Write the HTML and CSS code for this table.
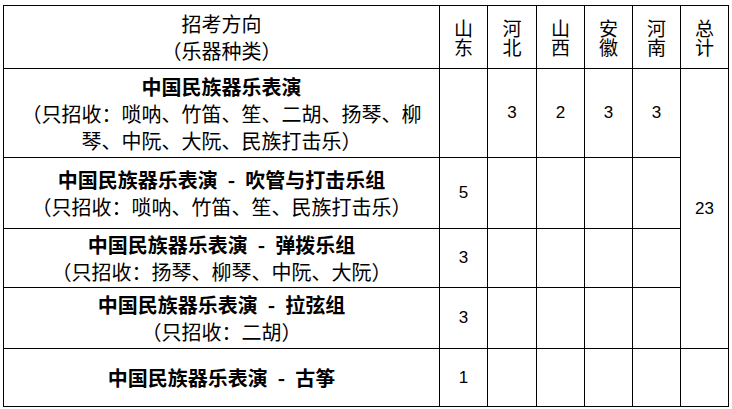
FILE: index.html
```html
<!DOCTYPE html>
<html lang="zh-CN">
<head>
<meta charset="utf-8">
<title>招考方向</title>
<link rel="stylesheet" href="styles.css">
</head>
<body>
<table class="grid">
  <colgroup>
    <col class="c-name">
    <col class="c-prov">
    <col class="c-prov c-wide">
    <col class="c-prov">
    <col class="c-prov">
    <col class="c-prov">
    <col class="c-prov">
  </colgroup>
  <tr class="r-head">
    <td class="name">招考方向<br>（乐器种类）</td>
    <td class="vert"><span class="ch">山</span><span class="ch">东</span></td>
    <td class="vert"><span class="ch">河</span><span class="ch">北</span></td>
    <td class="vert"><span class="ch">山</span><span class="ch">西</span></td>
    <td class="vert"><span class="ch">安</span><span class="ch">徽</span></td>
    <td class="vert"><span class="ch">河</span><span class="ch">南</span></td>
    <td class="vert"><span class="ch">总</span><span class="ch">计</span></td>
  </tr>
  <tr class="r1">
    <td class="name"><b>中国民族器乐表演</b><br>（只招收：唢呐、竹笛、笙、二胡、扬琴、柳<br>琴、中阮、大阮、民族打击乐）</td>
    <td class="num"></td>
    <td class="num">3</td>
    <td class="num">2</td>
    <td class="num">3</td>
    <td class="num">3</td>
    <td class="num total" rowspan="4">23</td>
  </tr>
  <tr class="r2">
    <td class="name"><b>中国民族器乐表演<span class="dash">-</span>吹管与打击乐组</b><br>（只招收：唢呐、竹笛、笙、民族打击乐）</td>
    <td class="num">5</td>
    <td class="num"></td>
    <td class="num"></td>
    <td class="num"></td>
    <td class="num"></td>
  </tr>
  <tr class="r3">
    <td class="name"><b>中国民族器乐表演<span class="dash">-</span>弹拨乐组</b><br>（只招收：扬琴、柳琴、中阮、大阮）</td>
    <td class="num">3</td>
    <td class="num"></td>
    <td class="num"></td>
    <td class="num"></td>
    <td class="num"></td>
  </tr>
  <tr class="r4">
    <td class="name"><b>中国民族器乐表演<span class="dash">-</span>拉弦组</b><br>（只招收：二胡）</td>
    <td class="num">3</td>
    <td class="num"></td>
    <td class="num"></td>
    <td class="num"></td>
    <td class="num"></td>
  </tr>
  <tr class="r5">
    <td class="name"><b>中国民族器乐表演<span class="dash">-</span>古筝</b></td>
    <td class="num">1</td>
    <td class="num"></td>
    <td class="num"></td>
    <td class="num"></td>
    <td class="num"></td>
    <td class="num"></td>
  </tr>
</table>
</body>
</html>
```
FILE: styles.css
```css
html, body {
  margin: 0;
  padding: 0;
  background: #ffffff;
}
body {
  padding: 5px 0 0 3px;
  font-family: "Noto Sans CJK SC", "Noto Sans", sans-serif;
  color: #000000;
}
.grid {
  border-collapse: collapse;
  table-layout: fixed;
  width: 726px;
}
.c-name { width: 436px; }
.c-prov { width: 48px; }
.c-wide { width: 49px; }
.grid td {
  border: 1px solid #000000;
  padding: 0;
  text-align: center;
  vertical-align: middle;
}
.name {
  font-size: 20px;
  line-height: 27px;
}
.name b {
  font-weight: 700;
}
.dash {
  display: inline-block;
  margin: 0 10px;
}
.vert {
  font-size: 19px;
  line-height: 19px;
}
.ch {
  display: block;
  height: 19px;
}
.num {
  font-family: "Liberation Sans", Arial, sans-serif;
  font-size: 17px;
}
.r-head td { height: 62px; }
.r1 td { height: 88px; }
.r2 td { height: 70px; }
.r3 td { height: 58px; }
.r4 td { height: 60px; }
.r5 td { height: 57px; }
.r1 td.total { height: auto; }
```
